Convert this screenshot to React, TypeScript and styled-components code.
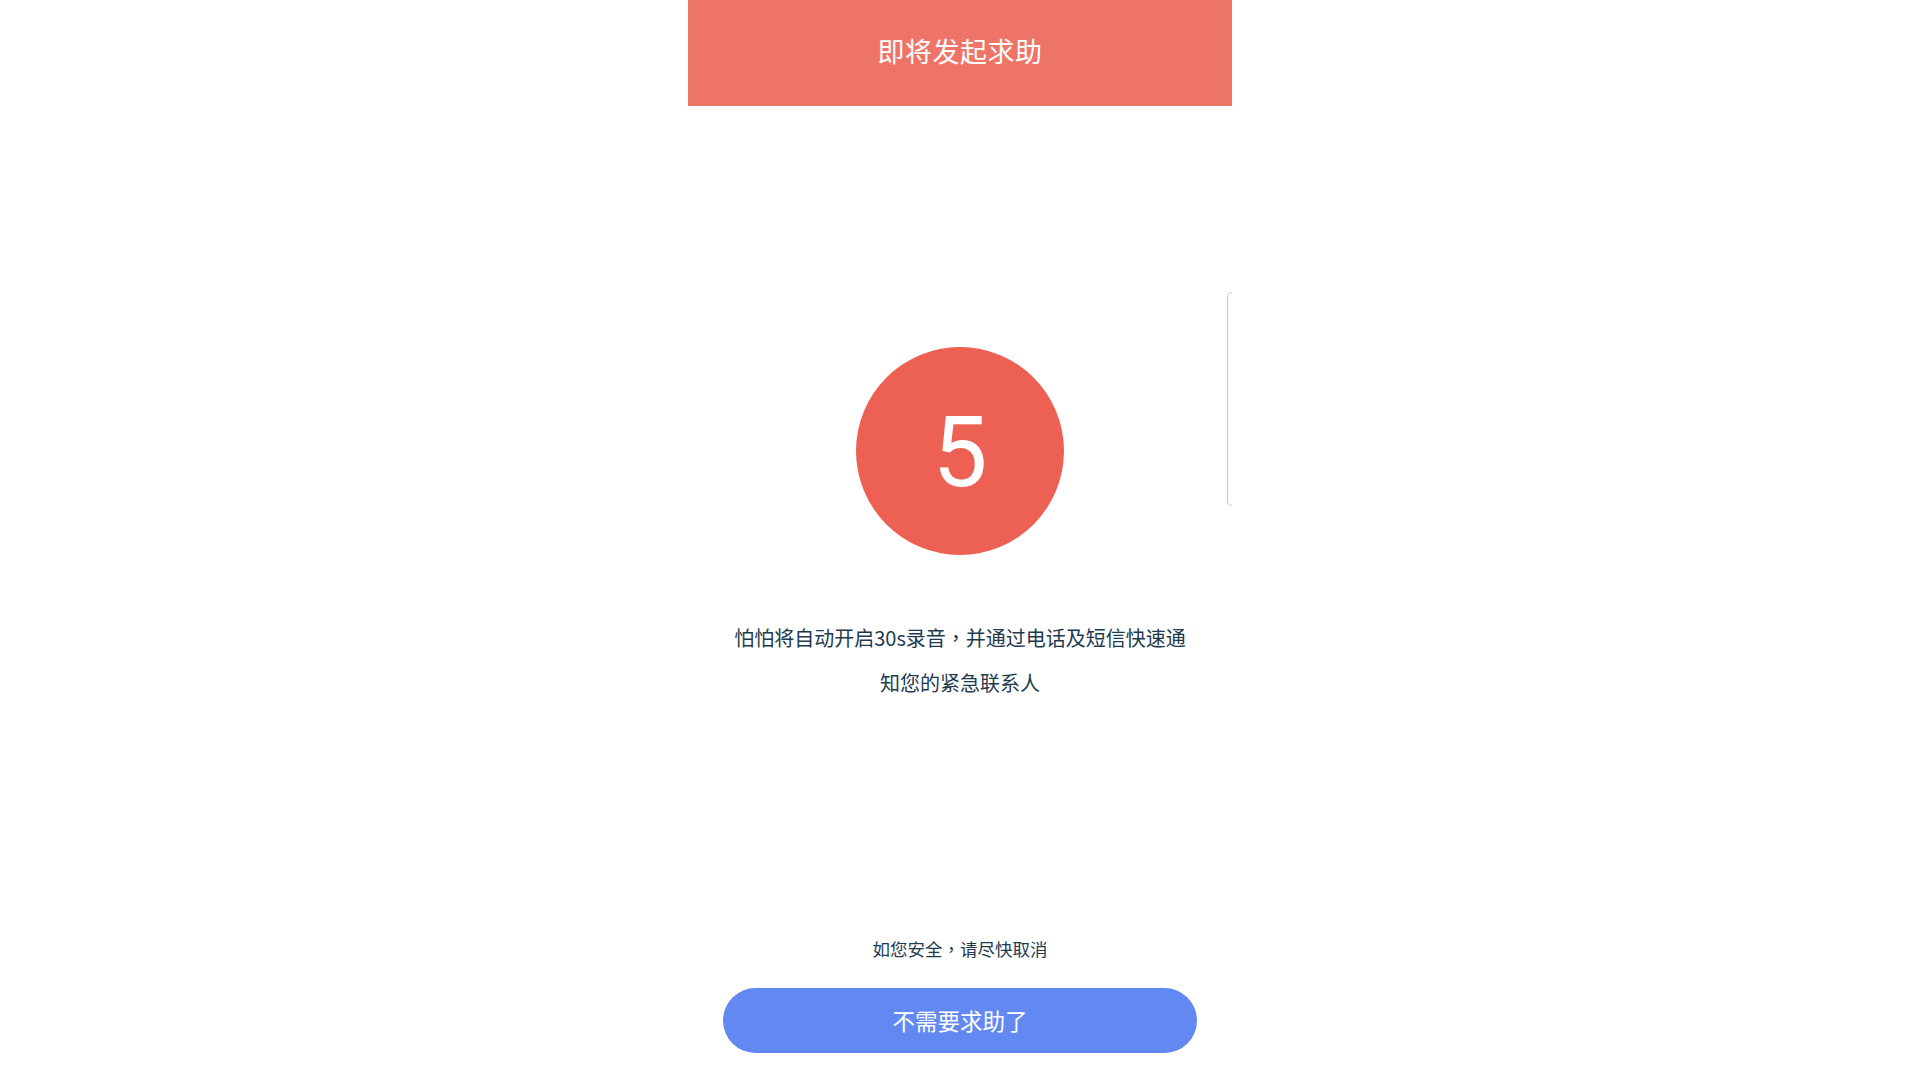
import React from "react";
import styled, { createGlobalStyle } from "styled-components";

const GlobalStyle = createGlobalStyle`
  html, body {
    margin: 0;
    padding: 0;
    background: #ffffff;
  }
  body {
    font-family: "Noto Sans CJK SC", "Noto Sans", Roboto, sans-serif;
  }
`;

const Page = styled.div`
  width: 100%;
  height: 100vh;
  display: flex;
  justify-content: center;
  background: #ffffff;
`;

const Phone = styled.div`
  position: relative;
  width: 544px;
  height: 100%;
  display: flex;
  flex-direction: column;
  align-items: center;
  background: #ffffff;
`;

const Header = styled.header`
  align-self: stretch;
  height: 106px;
  background: #ef7468;
  display: flex;
  align-items: center;
  justify-content: center;
  padding-bottom: 5px;
  box-sizing: border-box;
`;

const Title = styled.h1`
  margin: 0;
  font-size: 27px;
  font-weight: 400;
  color: #ffffff;
  letter-spacing: 0.5px;
`;

const Countdown = styled.div`
  margin-top: 241px;
  width: 208px;
  height: 208px;
  border-radius: 50%;
  background: #ec6153;
  display: flex;
  align-items: center;
  justify-content: center;
`;

const Digit = styled.span`
  font-family: Roboto, "Noto Sans", sans-serif;
  font-size: 98px;
  line-height: 1;
  color: #ffffff;
  margin-top: 4px;
`;

const Notice = styled.p`
  margin: 60px 0 0;
  width: 464px;
  text-align: center;
  font-size: 20px;
  line-height: 45px;
  color: #1e3a4f;
`;

const Punct = styled.span`
  font-family: "Noto Sans CJK TC", "Noto Sans CJK SC", sans-serif;
`;

const Spacer = styled.div`
  flex: 1;
`;

const Hint = styled.p`
  margin: 0;
  font-size: 17.5px;
  line-height: 24px;
  color: #1e3a4f;
`;

const CancelButton = styled.button`
  margin: 27px 0 27px;
  width: 474px;
  height: 65px;
  border: none;
  border-radius: 33px;
  background: #6189f1;
  color: #ffffff;
  font-family: "Noto Sans CJK SC", "Noto Sans", sans-serif;
  font-size: 22.5px;
  padding: 0 0 2px;
  cursor: pointer;
`;

const EdgeHandle = styled.div`
  position: absolute;
  top: 292px;
  right: 0;
  width: 5px;
  height: 214px;
  box-sizing: border-box;
  border: 1px solid #c9c9c9;
  border-right: none;
  border-radius: 6px 0 0 6px;
`;

export default function App() {
  return (
    <>
      <GlobalStyle />
      <Page>
        <Phone>
          <Header>
            <Title>即将发起求助</Title>
          </Header>
          <Countdown>
            <Digit>5</Digit>
          </Countdown>
          <Notice>
            怕怕将自动开启30s录音<Punct>，</Punct>并通过电话及短信快速通知您的紧急联系人
          </Notice>
          <Spacer />
          <Hint>
            如您安全<Punct>，</Punct>请尽快取消
          </Hint>
          <CancelButton>不需要求助了</CancelButton>
          <EdgeHandle />
        </Phone>
      </Page>
    </>
  );
}
